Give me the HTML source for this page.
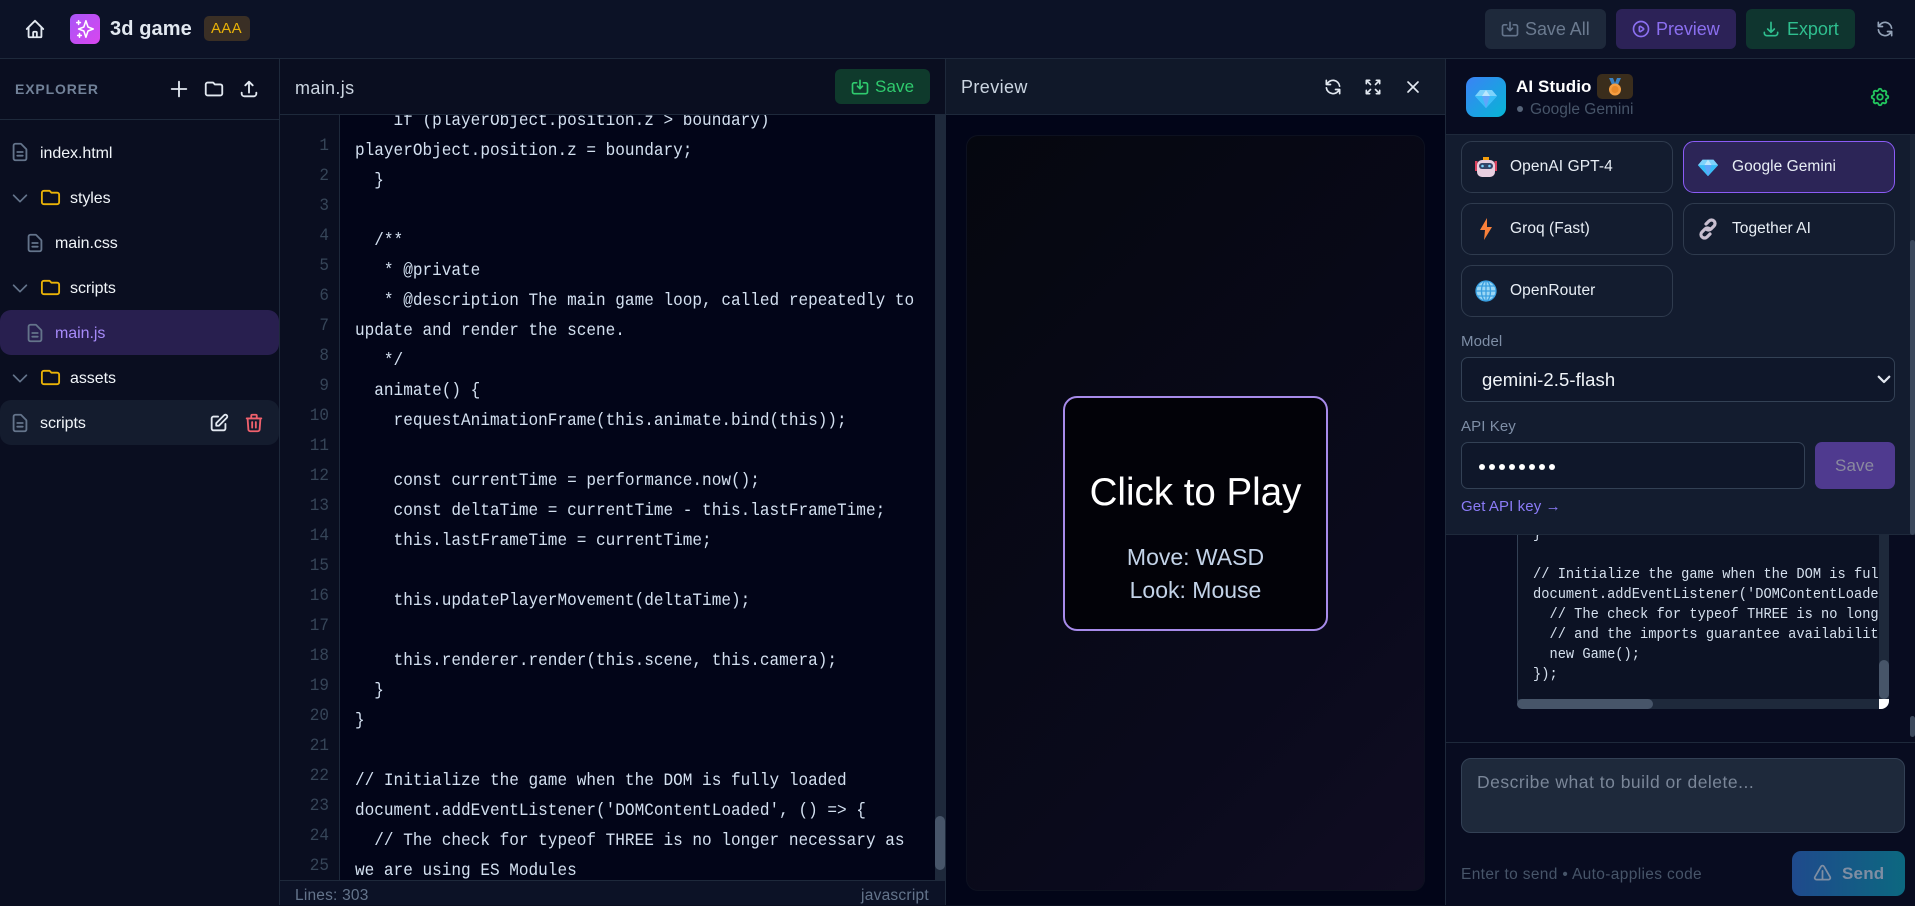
<!DOCTYPE html>
<html><head><meta charset="utf-8"><title>3d game</title>
<style>
*{box-sizing:border-box;margin:0;padding:0}
html,body{width:1915px;height:905px;overflow:hidden;background:#0a0e20;font-family:"Liberation Sans",sans-serif;color:#e2e8f0}
.b{position:absolute}
.t{position:absolute;white-space:pre;font-size:16px;line-height:20px;letter-spacing:-.05px}
.i{position:absolute;fill:none;stroke:currentColor;stroke-width:2;stroke-linecap:round;stroke-linejoin:round}
.code{position:absolute;font-family:"Liberation Mono",monospace;white-space:pre;color:#d3e0f0;transform:scaleX(.9143);transform-origin:0 0}
.n{position:absolute;left:280px;width:49px;text-align:right;font:17.5px/30px "Liberation Mono",monospace;color:#364558;white-space:pre;transform:scaleX(.9143);transform-origin:100% 0}
.prov{position:absolute;width:212px;height:52px;background:#131c2f;border:1px solid #2f3b4e;border-radius:11px}
.pt{font-size:15.5px;color:#e8eef5;letter-spacing:.1px}
</style></head><body>
<svg width="0" height="0" style="position:absolute"><defs>
<symbol id="home" viewBox="0 0 24 24"><path d="M3 12l2-2m0 0l7-7 7 7M5 10v10a1 1 0 001 1h3m10-11l2 2m-2-2v10a1 1 0 01-1 1h-3m-6 0a1 1 0 001-1v-4a1 1 0 011-1h2a1 1 0 011 1v4a1 1 0 001 1m-6 0h6"/></symbol>
<symbol id="file" viewBox="0 0 24 24"><path d="M9 12h6m-6 4h6m2 5H7a2 2 0 01-2-2V5a2 2 0 012-2h5.586a1 1 0 01.707.293l5.414 5.414a1 1 0 01.293.707V19a2 2 0 01-2 2z"/></symbol>
<symbol id="folder" viewBox="0 0 24 24"><path d="M3 7v10a2 2 0 002 2h14a2 2 0 002-2V9a2 2 0 00-2-2h-6l-2-2H5a2 2 0 00-2 2z"/></symbol>
<symbol id="chev" viewBox="0 0 24 24"><path d="M19 9l-7 7-7-7"/></symbol>
<symbol id="plus" viewBox="0 0 24 24"><path d="M12 4v16m8-8H4"/></symbol>
<symbol id="upload" viewBox="0 0 24 24"><path d="M4 16v1a3 3 0 003 3h10a3 3 0 003-3v-1m-4-8l-4-4m0 0L8 8m4-4v12"/></symbol>
<symbol id="edit" viewBox="0 0 24 24"><path d="M11 5H6a2 2 0 00-2 2v11a2 2 0 002 2h11a2 2 0 002-2v-5m-1.414-9.414a2 2 0 112.828 2.828L11.828 15H9v-2.828l8.586-8.586z"/></symbol>
<symbol id="trash" viewBox="0 0 24 24"><path d="M19 7l-.867 12.142A2 2 0 0116.138 21H7.862a2 2 0 01-1.995-1.858L5 7m5 4v6m4-6v6m1-10V4a1 1 0 00-1-1h-4a1 1 0 00-1 1v3M4 7h16"/></symbol>
<symbol id="refresh" viewBox="0 0 24 24"><path d="M4 4v5h.582m15.356 2A8.001 8.001 0 004.582 9m0 0H9m11 11v-5h-.581m0 0a8.003 8.003 0 01-15.357-2m15.357 2H15"/></symbol>
<symbol id="expand" viewBox="0 0 24 24"><path d="M4 8V4m0 0h4M4 4l5 5m11-1V4m0 0h-4m4 0l-5 5M4 16v4m0 0h4m-4 0l5-5m11 5l-5-5m5 5v-4m0 4h-4"/></symbol>
<symbol id="x" viewBox="0 0 24 24"><path d="M6 18L18 6M6 6l12 12"/></symbol>
<symbol id="play" viewBox="0 0 24 24"><path d="M14.752 11.168l-3.197-2.132A1 1 0 0010 9.87v4.263a1 1 0 001.555.832l3.197-2.132a1 1 0 000-1.664z"/><path d="M21 12a9 9 0 11-18 0 9 9 0 0118 0z"/></symbol>
<symbol id="down" viewBox="0 0 24 24"><path d="M4 16v1a3 3 0 003 3h10a3 3 0 003-3v-1m-4-4l-4 4m0 0l-4-4m4 4V4"/></symbol>
<symbol id="save" viewBox="0 0 24 24"><path d="M8 7H5a2 2 0 00-2 2v9a2 2 0 002 2h14a2 2 0 002-2V9a2 2 0 00-2-2h-3m-1 4l-3 3m0 0l-3-3m3 3V4"/></symbol>
<symbol id="spark" viewBox="0 0 24 24"><path d="M5 3v4M3 5h4M6 17v4m-2-2h4m5-16l2.286 6.857L21 12l-5.714 2.143L13 21l-2.286-6.857L5 12l5.714-2.143L13 3z"/></symbol>
<symbol id="gear" viewBox="0 0 24 24"><path d="M10.325 4.317c.426-1.756 2.924-1.756 3.35 0a1.724 1.724 0 002.573 1.066c1.543-.94 3.31.826 2.37 2.37a1.724 1.724 0 001.065 2.572c1.756.426 1.756 2.924 0 3.35a1.724 1.724 0 00-1.066 2.573c.94 1.543-.826 3.31-2.37 2.37a1.724 1.724 0 00-2.572 1.065c-.426 1.756-2.924 1.756-3.35 0a1.724 1.724 0 00-2.573-1.066c-1.543.94-3.31-.826-2.37-2.37a1.724 1.724 0 00-1.065-2.572c-1.756-.426-1.756-2.924 0-3.35a1.724 1.724 0 001.066-2.573c-.94-1.543.826-3.31 2.37-2.37.996.608 2.296.07 2.572-1.065z"/><path d="M15 12a3 3 0 11-6 0 3 3 0 016 0z"/></symbol>
<symbol id="warn" viewBox="0 0 24 24"><path d="M12 9v10M5.072 19h13.856c1.54 0 2.502-1.667 1.732-3L13.732 4c-.77-1.333-2.694-1.333-3.464 0L3.34 16c-.77 1.333.192 3 1.732 3z"/></symbol>
<symbol id="gem" viewBox="0 0 24 24"><path fill="#7dd3fc" d="M6 4h12l5 6-11 12L1 10z"/><path fill="#38bdf8" d="M1 10h22L12 22z"/><path fill="#bae6fd" d="M8 10l4-6 4 6z"/><path fill="#60a5fa" d="M8 10h8l-4 12z"/></symbol>
</defs></svg>

<!-- top bar -->
<div class="b" style="left:0;top:0;width:1915px;height:59px;background:#0c1226;border-bottom:1px solid #1e293b"></div>
<svg class="i" style="left:24px;top:18px;color:#e2e8f0" width="22" height="22"><use href="#home"/></svg>
<div class="b" style="left:70px;top:14px;width:30px;height:30px;border-radius:6px;background:linear-gradient(135deg,#a855f7,#d946ef)"></div>
<svg class="i" style="left:74px;top:18px;color:#fff;stroke-width:1.7" width="22" height="22"><use href="#spark"/></svg>
<div class="t" style="left:110px;top:17px;font-size:20px;line-height:24px;font-weight:700;color:#e2e8f0;letter-spacing:.1px">3d game</div>
<div class="b" style="left:204px;top:16px;width:46px;height:25px;border-radius:5px;background:#3a2f25"></div>
<div class="t" style="left:211px;top:19px;font-size:15px;color:#eab308;letter-spacing:.3px">AAA</div>

<div class="b" style="left:1485px;top:9px;width:121px;height:40px;border-radius:6px;background:#1e293b"></div>
<svg class="i" style="left:1500px;top:19px;color:#64748b" width="20" height="20"><use href="#save"/></svg>
<div class="t" style="left:1525px;top:19px;font-size:18px;color:#6b7a8f">Save All</div>
<div class="b" style="left:1616px;top:9px;width:120px;height:40px;border-radius:6px;background:#2c2257"></div>
<svg class="i" style="left:1631px;top:19px;color:#8b6ff0" width="20" height="20"><use href="#play"/></svg>
<div class="t" style="left:1656px;top:19px;font-size:18px;color:#8b6ff0">Preview</div>
<div class="b" style="left:1746px;top:9px;width:109px;height:40px;border-radius:6px;background:#0f352f"></div>
<svg class="i" style="left:1761px;top:19px;color:#2fbf8f" width="20" height="20"><use href="#down"/></svg>
<div class="t" style="left:1787px;top:19px;font-size:18px;color:#2fbf8f">Export</div>
<svg class="i" style="left:1875px;top:19px;color:#94a3b8" width="20" height="20"><use href="#refresh"/></svg>

<!-- sidebar -->
<div class="b" style="left:0;top:59px;width:280px;height:846px;background:#0a0e20;border-right:1px solid #1e293b"></div>
<div class="b" style="left:0;top:119px;width:279px;height:1px;background:#1e293b"></div>
<div class="t" style="left:15px;top:79px;font-size:14px;font-weight:700;color:#728299;letter-spacing:.85px">EXPLORER</div>
<svg class="i" style="left:168px;top:78px;color:#e2e8f0" width="22" height="22"><use href="#plus"/></svg>
<svg class="i" style="left:203px;top:78px;color:#e2e8f0" width="22" height="22"><use href="#folder"/></svg>
<svg class="i" style="left:238px;top:78px;color:#e2e8f0" width="22" height="22"><use href="#upload"/></svg>

<svg class="i" style="left:9px;top:141px;color:#64748b" width="22" height="22"><use href="#file"/></svg>
<div class="t" style="left:40px;top:144px;color:#f1f5f9">index.html</div>
<svg class="i" style="left:9px;top:187px;color:#64748b;stroke-width:1.8" width="22" height="22"><use href="#chev"/></svg>
<svg class="i" style="left:39px;top:186px;color:#eab308;stroke-width:1.9" width="23" height="23"><use href="#folder"/></svg>
<div class="t" style="left:70px;top:189px;color:#f1f5f9">styles</div>
<svg class="i" style="left:24px;top:232px;color:#64748b" width="22" height="22"><use href="#file"/></svg>
<div class="t" style="left:55px;top:234px;color:#f1f5f9">main.css</div>
<svg class="i" style="left:9px;top:277px;color:#64748b;stroke-width:1.8" width="22" height="22"><use href="#chev"/></svg>
<svg class="i" style="left:39px;top:276px;color:#eab308;stroke-width:1.9" width="23" height="23"><use href="#folder"/></svg>
<div class="t" style="left:70px;top:279px;color:#f1f5f9">scripts</div>
<div class="b" style="left:0;top:310px;width:279px;height:45px;border-radius:11px;background:#281f4f"></div>
<svg class="i" style="left:24px;top:322px;color:#64748b" width="22" height="22"><use href="#file"/></svg>
<div class="t" style="left:55px;top:324px;color:#a78bfa">main.js</div>
<svg class="i" style="left:9px;top:367px;color:#64748b;stroke-width:1.8" width="22" height="22"><use href="#chev"/></svg>
<svg class="i" style="left:39px;top:366px;color:#eab308;stroke-width:1.9" width="23" height="23"><use href="#folder"/></svg>
<div class="t" style="left:70px;top:369px;color:#f1f5f9">assets</div>
<div class="b" style="left:0;top:400px;width:279px;height:45px;border-radius:11px;background:#141c2e"></div>
<svg class="i" style="left:9px;top:412px;color:#64748b" width="22" height="22"><use href="#file"/></svg>
<div class="t" style="left:40px;top:414px;color:#f1f5f9">scripts</div>
<svg class="i" style="left:208px;top:412px;color:#e2e8f0" width="22" height="22"><use href="#edit"/></svg>
<svg class="i" style="left:243px;top:412px;color:#f0616d" width="22" height="22"><use href="#trash"/></svg>

<!-- editor -->
<div class="b" style="left:280px;top:59px;width:666px;height:846px;background:#0a0e20;border-right:1px solid #1e293b"></div>
<div class="t" style="left:295px;top:77px;font-size:18px;line-height:22px;color:#cbd5e1;letter-spacing:.35px">main.js</div>
<div class="b" style="left:835px;top:69px;width:95px;height:35px;border-radius:6px;background:#0f3a2c"></div>
<svg class="i" style="left:850px;top:77px;color:#2fcb6e" width="20" height="20"><use href="#save"/></svg>
<div class="t" style="left:875px;top:77px;font-size:17px;color:#2fcb6e;letter-spacing:.1px">Save</div>
<div class="b" style="left:280px;top:114px;width:665px;height:1px;background:#1e293b"></div>
<div class="b" style="left:339px;top:115px;width:606px;height:765px;background:#020518;border-left:1px solid #1e293b"></div>
<div class="b" style="left:935px;top:115px;width:10px;height:765px;background:#1e293b"></div>
<div class="b" style="left:935px;top:816px;width:10px;height:54px;border-radius:5px;background:#475569"></div>
<div class="b" style="left:340px;top:115px;width:595px;height:765px;overflow:hidden">
<div class="code" style="left:15px;top:-9px;font-size:17.5px;line-height:30px;transform:scaleX(.918)">    if (playerObject.position.z &gt; boundary)
playerObject.position.z = boundary;
  }

  /**
   * @private
   * @description The main game loop, called repeatedly to
update and render the scene.
   */
  animate() {
    requestAnimationFrame(this.animate.bind(this));

    const currentTime = performance.now();
    const deltaTime = currentTime - this.lastFrameTime;
    this.lastFrameTime = currentTime;

    this.updatePlayerMovement(deltaTime);

    this.renderer.render(this.scene, this.camera);
  }
}

// Initialize the game when the DOM is fully loaded
document.addEventListener('DOMContentLoaded', () =&gt; {
  // The check for typeof THREE is no longer necessary as
we are using ES Modules</div></div>
<div class="n" style="top:131px">1
2
3
4
5
6
7
8
9
10
11
12
13
14
15
16
17
18
19
20
21
22
23
24
25</div>
<div class="b" style="left:280px;top:880px;width:665px;height:25px;background:#0c1226;border-top:1px solid #1e293b"></div>
<div class="t" style="left:295px;top:886px;font-size:15.5px;color:#64748b;letter-spacing:.2px">Lines: 303</div>
<div class="t" style="left:861px;top:886px;font-size:15.5px;color:#64748b;letter-spacing:.25px">javascript</div>

<!-- preview -->
<div class="b" style="left:946px;top:59px;width:499px;height:846px;background:#020518"></div>
<div class="b" style="left:946px;top:59px;width:499px;height:56px;background:#101829;border-bottom:1px solid #1e293b"></div>
<div class="t" style="left:961px;top:76px;font-size:18px;line-height:22px;color:#cbd5e1;letter-spacing:.4px">Preview</div>
<svg class="i" style="left:1323px;top:77px;color:#e2e8f0" width="20" height="20"><use href="#refresh"/></svg>
<svg class="i" style="left:1363px;top:77px;color:#e2e8f0" width="20" height="20"><use href="#expand"/></svg>
<svg class="i" style="left:1403px;top:77px;color:#e2e8f0" width="20" height="20"><use href="#x"/></svg>
<div class="b" style="left:966px;top:135px;width:459px;height:756px;border-radius:12px;background:linear-gradient(135deg,#05070f,#0a0a1c 70%,#100d22);box-shadow:inset 0 0 0 1px #0d1120"></div>
<div class="b" style="left:1063px;top:396px;width:265px;height:235px;border:2px solid #a78bea;border-radius:14px;background:#020208"></div>
<div class="b" style="left:1063px;top:469px;width:265px;text-align:center;font-size:38.5px;line-height:48px;color:#fff">Click to Play</div>
<div class="b" style="left:1063px;top:541px;width:265px;text-align:center;font-size:23px;line-height:33px;color:#c3d3e8">Move: WASD<br>Look: Mouse</div>

<!-- AI panel -->
<div class="b" style="left:1445px;top:59px;width:470px;height:846px;background:#080c20;border-left:1px solid #1e293b"></div>
<div class="b" style="left:1466px;top:77px;width:40px;height:40px;border-radius:9px;background:linear-gradient(135deg,#3b82f6,#06b6d4)"></div>
<svg class="b" style="left:1474px;top:86px" width="24" height="24"><use href="#gem"/></svg>
<div class="t" style="left:1516px;top:76px;font-size:17px;line-height:22px;font-weight:700;color:#fff;letter-spacing:.1px">AI Studio</div>
<div class="b" style="left:1597px;top:74px;width:36px;height:25px;border-radius:5px;background:#3a2d1c"></div>
<svg class="b" style="left:1606px;top:78px" width="18" height="18" viewBox="0 0 18 18"><path fill="#3b82c4" d="M3 0h4l2 5 2-5h4l-4 9H7z"/><circle cx="9" cy="11.5" r="6" fill="#f59e42"/><circle cx="9" cy="11.5" r="3.6" fill="#e98a2a"/></svg>
<div class="b" style="left:1517px;top:106px;width:6px;height:6px;border-radius:50%;background:#566479"></div>
<div class="t" style="left:1530px;top:100px;font-size:15.5px;color:#475569;letter-spacing:0">Google Gemini</div>
<svg class="i" style="left:1869px;top:86px;color:#22c55e" width="22" height="22"><use href="#gear"/></svg>

<div class="b" style="left:1446px;top:134px;width:469px;height:401px;background:#131c2f;border-top:1px solid #1e293b;border-bottom:1px solid #1e293b"></div>
<div class="b" style="left:1910px;top:135px;width:5px;height:399px;background:#1a2436"></div>
<div class="b" style="left:1910px;top:240px;width:5px;height:295px;border-radius:3px;background:#3b485c"></div>

<div class="prov" style="left:1461px;top:141px"></div>
<svg class="b" style="left:1475px;top:156px" width="22" height="22" viewBox="0 0 22 22"><rect x="0" y="5" width="2.5" height="10" fill="#d9415e"/><rect x="19.5" y="5" width="2.5" height="10" fill="#d9415e"/><rect x="8" y="1" width="6" height="3" fill="#f59e0b"/><rect x="2" y="4" width="18" height="17" rx="5" fill="#e8cfe0"/><rect x="4" y="7" width="14" height="6" rx="3" fill="#334569"/><circle cx="7.5" cy="10" r="1.3" fill="#7dd3fc"/><circle cx="14.5" cy="10" r="1.3" fill="#7dd3fc"/></svg>
<div class="t pt" style="left:1510px;top:157px">OpenAI GPT-4</div>
<div class="prov" style="left:1683px;top:141px;background:#2c2557;border-color:#8b5cf6"></div>
<svg class="b" style="left:1697px;top:156px" width="22" height="22"><use href="#gem"/></svg>
<div class="t pt" style="left:1732px;top:157px;letter-spacing:.05px">Google Gemini</div>
<div class="prov" style="left:1461px;top:203px"></div>
<svg class="b" style="left:1477px;top:218px" width="18" height="22" viewBox="0 0 18 22"><path fill="#f9803a" d="M10 0L3 12h5l-1 10 8-13h-5z"/></svg>
<div class="t pt" style="left:1510px;top:219px;letter-spacing:.05px">Groq (Fast)</div>
<div class="prov" style="left:1683px;top:203px"></div>
<svg class="b" style="left:1697px;top:218px;fill:none;stroke:#c9bfd0;stroke-width:3.2;stroke-linecap:round" width="22" height="22" viewBox="0 0 22 22"><path d="M9 6l3-3a3.5 3.5 0 015 5l-3 3a3.5 3.5 0 01-4.5.3"/><path d="M13 16l-3 3a3.5 3.5 0 01-5-5l3-3a3.5 3.5 0 014.5-.3"/></svg>
<div class="t pt" style="left:1732px;top:219px;letter-spacing:.05px">Together AI</div>
<div class="prov" style="left:1461px;top:265px"></div>
<svg class="b" style="left:1475px;top:280px;fill:none;stroke:#3a9fe0;stroke-width:1.3" width="22" height="22" viewBox="0 0 22 22"><circle cx="11" cy="11" r="10" fill="#9bd7f5"/><ellipse cx="11" cy="11" rx="4.5" ry="10"/><path d="M11 1v20M1 11h20M2.5 6h17M2.5 16h17"/></svg>
<div class="t pt" style="left:1510px;top:281px">OpenRouter</div>

<div class="t" style="left:1461px;top:332px;font-size:15px;color:#7e8ea6;letter-spacing:.1px">Model</div>
<div class="b" style="left:1461px;top:357px;width:434px;height:45px;border:1px solid #334155;border-radius:7px;background:#0f172a"></div>
<div class="t" style="left:1482px;top:370px;font-size:18.5px;color:#f1f5f9;letter-spacing:.1px">gemini-2.5-flash</div>
<svg class="i" style="left:1875px;top:370px;color:#e2e8f0;stroke-width:3" width="18" height="18" viewBox="0 0 24 24"><use href="#chev"/></svg>
<div class="t" style="left:1461px;top:417px;font-size:15px;color:#7e8ea6;letter-spacing:.1px">API Key</div>
<div class="b" style="left:1461px;top:442px;width:344px;height:47px;border:1px solid #334155;border-radius:7px;background:#0f172a"></div>
<svg class="b" style="left:1477px;top:461px" width="80" height="12" fill="#fff"><circle cx="5" cy="6" r="3"/><circle cx="15" cy="6" r="3"/><circle cx="25" cy="6" r="3"/><circle cx="35" cy="6" r="3"/><circle cx="45" cy="6" r="3"/><circle cx="55" cy="6" r="3"/><circle cx="65" cy="6" r="3"/><circle cx="75" cy="6" r="3"/></svg>
<div class="b" style="left:1815px;top:442px;width:80px;height:47px;border-radius:7px;background:#4f3a8f"></div>
<div class="t" style="left:1835px;top:456px;font-size:17px;color:#8a8a9f;letter-spacing:.1px">Save</div>
<div class="t" style="left:1461px;top:497px;font-size:15px;color:#8b7bf7;letter-spacing:.1px">Get API key →</div>

<div class="b" style="left:1517px;top:535px;width:372px;height:174px;background:#0c1224;border:1px solid #334155;border-top:0;border-radius:0 0 9px 9px"></div>
<div class="b" style="left:1518px;top:535px;width:360px;height:162px;overflow:hidden">
<div class="code" style="left:14.5px;top:-10px;font-size:15px;line-height:20px;color:#d5e0ee">}

// Initialize the game when the DOM is fully loaded
document.addEventListener('DOMContentLoaded', () =&gt; {
  // The check for typeof THREE is no longer necessary as
  // and the imports guarantee availability
  new Game();
});</div></div>
<div class="b" style="left:1879px;top:535px;width:10px;height:164px;background:#1e293b"></div>
<div class="b" style="left:1879px;top:660px;width:10px;height:39px;border-radius:5px;background:#475569"></div>
<div class="b" style="left:1518px;top:699px;width:361px;height:10px;background:#1e293b;border-radius:0 0 0 8px"></div>
<div class="b" style="left:1517px;top:699px;width:136px;height:10px;border-radius:5px;background:#475569"></div>
<div class="b" style="left:1879px;top:699px;width:10px;height:10px;background:#fff;border-radius:0 0 8px 0"></div>
<div class="b" style="left:1910px;top:716px;width:5px;height:21px;border-radius:3px;background:#3b485c"></div>

<div class="b" style="left:1446px;top:742px;width:469px;height:1px;background:#1e293b"></div>
<div class="b" style="left:1461px;top:758px;width:444px;height:75px;border:1px solid #334155;border-radius:10px;background:#1e293b"></div>
<div class="t" style="left:1477px;top:772px;font-size:17.5px;color:#7a8698;letter-spacing:.5px">Describe what to build or delete...</div>
<div class="t" style="left:1461px;top:865px;font-size:15.5px;color:#475569;letter-spacing:.35px">Enter to send • Auto-applies code</div>
<div class="b" style="left:1792px;top:851px;width:113px;height:45px;border-radius:9px;background:linear-gradient(90deg,#1f4a8c,#0c6880)"></div>
<svg class="i" style="left:1812px;top:863px;color:#7f8ea3" width="21" height="21"><use href="#warn"/></svg>
<div class="t" style="left:1842px;top:864px;font-size:17px;font-weight:700;color:#7f8ea3;letter-spacing:.2px">Send</div>
</body></html>
